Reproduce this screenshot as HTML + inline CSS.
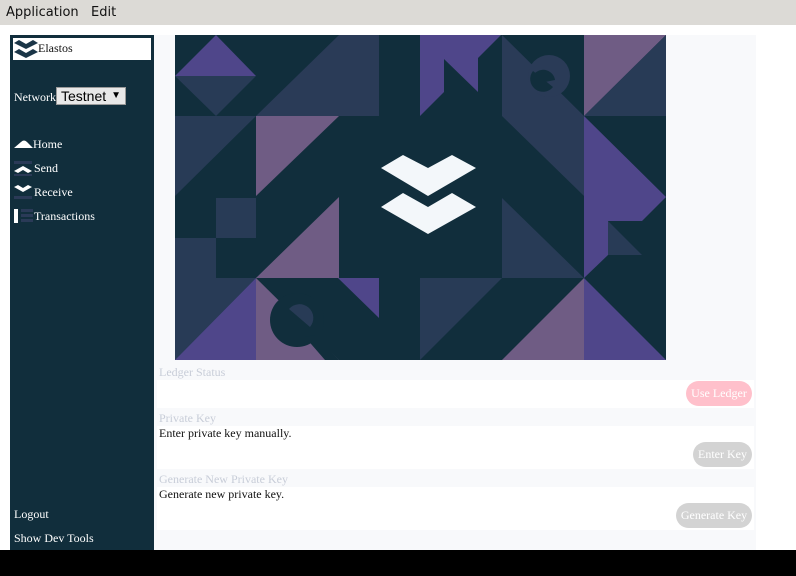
<!DOCTYPE html>
<html><head><meta charset="utf-8"><style>
*{margin:0;padding:0;box-sizing:border-box}
body{width:796px;height:576px;background:#fff;position:relative;overflow:hidden;font-family:"Liberation Serif",serif;font-size:12px}
.abs{position:absolute}
#menu{left:0;top:0;width:796px;height:25px;background:#dcdad6;font-family:"DejaVu Sans",sans-serif;font-size:13px;color:#111}
#side{left:10px;top:35px;width:144px;height:515px;background:#112e3c;color:#fff}
#main{left:154px;top:35px;width:602px;height:515px;background:#f8f9fb}
.hd{position:absolute;left:5px;width:595px;height:16px;color:#c8cdd8;font-size:12px;padding-left:0;line-height:16px}
.bd{position:absolute;left:3px;width:597px;background:#fff;color:#111;font-size:12px;line-height:14px;padding-left:2px}
.btn{position:absolute;right:4px;height:25px;border-radius:13px;color:#fff;font-size:12px;line-height:25px;text-align:center}
</style></head><body>
<div id="menu" class="abs"><span class="abs" style="left:6px;top:4px;line-height:17px">Application</span><span class="abs" style="left:91px;top:4px;line-height:17px">Edit</span></div>
<div class="abs" style="left:0;top:550px;width:796px;height:26px;background:#000"></div>
<div id="side" class="abs">
 <div class="abs" style="left:3px;top:3px;width:138px;height:22px;background:#fff;color:#111">
  <svg class="abs" style="left:1px;top:1px" width="24" height="20" viewBox="0 0 24 20"><path d="M0 4L5 1L12 5L19 1L24 4L12 10Z" fill="#1a3547"/><path d="M0 13L5 10L12 14L19 10L24 13L12 19Z" fill="#1a3547"/></svg>
  <span class="abs" style="left:25px;top:3px">Elastos</span></div>
 <span class="abs" style="left:4px;top:55px">Network</span>
 <div class="abs" style="left:46px;top:52px;width:70px;height:18px;background:#e8e8e8;border:1px solid #999;color:#000;font-family:'Liberation Sans',sans-serif;font-size:14px;line-height:16px;padding-left:4px">Testnet<span class="abs" style="right:4px;top:0;font-size:10px">▼</span></div>
 <svg class="abs" style="left:4px;top:104px" width="20" height="10"><path d="M0 9L7 3Q10 0 13 3L19 9Z" fill="#fff"/></svg>
 <span class="abs" style="left:23px;top:102px">Home</span>
 <svg class="abs" style="left:4px;top:126px" width="20" height="16"><rect x="0" y="0" width="18" height="3" fill="#2a3a57"/><path d="M0 10L9 5L18 10L14 12L9 9L4 12Z" fill="#fff"/><rect x="0" y="13" width="18" height="2" fill="#2a3a57"/></svg>
 <span class="abs" style="left:24px;top:126px">Send</span>
 <svg class="abs" style="left:4px;top:150px" width="20" height="16"><path d="M0 2L4 0L9 3L14 0L18 2L9 7Z" fill="#fff"/><rect x="0" y="11" width="18" height="3" fill="#2a3a57"/></svg>
 <span class="abs" style="left:24px;top:150px">Receive</span>
 <svg class="abs" style="left:4px;top:173px" width="20" height="16"><rect x="0" y="1" width="4" height="14" fill="#fff"/><rect x="7" y="1" width="12" height="3" fill="#2a3a57"/><rect x="7" y="6" width="12" height="3" fill="#2a3a57"/><rect x="7" y="11" width="12" height="3" fill="#2a3a57"/></svg>
 <span class="abs" style="left:24px;top:174px">Transactions</span>
 <span class="abs" style="left:4px;top:472px">Logout</span>
 <span class="abs" style="left:4px;top:496px">Show Dev Tools</span>
</div>
<div id="main" class="abs">
 <svg class="abs" style="left:21px;top:0" width="491" height="325" viewBox="0 0 491 325">
  <rect width="491" height="325" fill="#112e3c"/>
  <path d="M0 41L41 0L81 41Z" fill="#4f468a"/>
  <path d="M0 41L81 41L41 81Z" fill="#283b56"/>
  <path d="M81 81L164 0L204 0L204 81Z" fill="#2a3b57"/>
  <path d="M245 0L326 0L303 23L303 57L269 24L269 57L245 81Z" fill="#4f468a"/>
  <path d="M327 0L409 81L409 161L327 81Z" fill="#2a3b57"/>
  <circle cx="374" cy="41" r="21" fill="#2a3b57"/>
  <path d="M360 38A12 12 0 0 1 380 45L370 47Z" fill="#112e3c"/>
  <path d="M358 36A12 12 0 0 0 378 52L368 44Z" fill="#112e3c"/>
  <path d="M409 0L491 0L409 81Z" fill="#6f5c84"/>
  <path d="M491 0L491 81L409 81Z" fill="#283b56"/>
  <path d="M0 81L81 81L0 161Z" fill="#283b56"/>
  <path d="M81 81L164 81L81 161Z" fill="#6f5c84"/>
  <path d="M409 81L491 162L467 186L433 186L433 220L409 243Z" fill="#4f468a"/>
  <path d="M433 186L467 220L433 220Z" fill="#283b56"/>
  <rect x="41" y="163" width="40" height="40" fill="#283b56"/>
  <path d="M0 203L41 203L41 243L81 243L0 325Z" fill="#283b56"/>
  <path d="M0 325L81 243L81 325Z" fill="#4f468a"/>
  <path d="M81 243L164 162L164 243Z" fill="#6f5c84"/>
  <path d="M81 243L81 325L164 325Z" fill="#6f5c84"/>
  <circle cx="122" cy="285" r="27" fill="#112e3c"/>
  <path d="M130 302L150 325L164 325L140 300Z" fill="#112e3c"/>
  <path d="M114 274A11 11 0 0 1 135 292Z" fill="#283b56"/>
  <path d="M163 243L204 243L204 283Z" fill="#4f468a"/>
  <path d="M245 243L327 243L245 325Z" fill="#283b56"/>
  <path d="M327 163L409 243L327 243Z" fill="#283b56"/>
  <path d="M409 243L409 325L327 325Z" fill="#6f5c84"/>
  <path d="M409 243L491 325L409 325Z" fill="#4f468a"/>
  <path d="M206 133L228 120L253 133L277 120L301 133L253 161Z" fill="#f3f7fa"/>
  <path d="M206 172L228 158L253 172L277 158L301 172L253 199Z" fill="#f3f7fa"/>
 </svg>
 <div class="hd" style="top:329px">Ledger Status</div>
 <div class="bd" style="top:345px;height:28px"></div>
 <div class="btn" style="top:346px;width:66px;background:#ffc0cb">Use Ledger</div>
 <div class="hd" style="top:375px">Private Key</div>
 <div class="bd" style="top:391px;height:43px">Enter private key manually.</div>
 <div class="btn" style="top:407px;width:59px;background:#d3d3d3">Enter Key</div>
 <div class="hd" style="top:436px">Generate New Private Key</div>
 <div class="bd" style="top:452px;height:43px">Generate new private key.</div>
 <div class="btn" style="top:468px;width:76px;background:#d3d3d3">Generate Key</div>
</div>
</body></html>
